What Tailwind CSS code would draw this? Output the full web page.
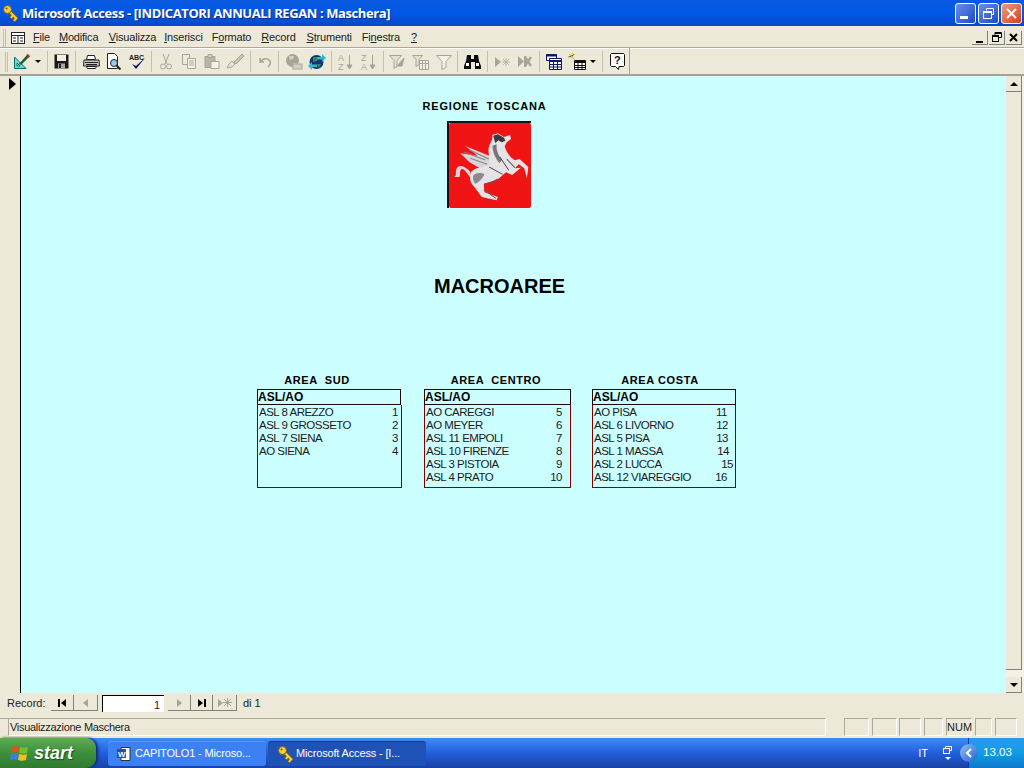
<!DOCTYPE html>
<html lang="en">
<head>
    <meta charset="UTF-8">
    <title>Microsoft Access</title>
    <script src="https://cdn.jsdelivr.net/npm/@tailwindcss/browser@4"></script>
</head>
<body class="bg-[#ece9d8] font-['Liberation_Sans',sans-serif] text-black overflow-hidden">
<div class="w-[1024px] h-[768px] flex flex-col overflow-hidden">

    <!-- title bar -->
    <div class="h-[26px] shrink-0 flex items-center pl-[2px] pr-[2px] bg-gradient-to-b from-[#0a5ae0] via-[#0058e6] to-[#0348c8]">
        <svg class="w-[18px] h-[18px]" viewBox="0 0 18 18"><path d="M6 6l9 9M11 11l-2 3M14 14l-2 3" stroke="#7a5a10" stroke-width="4"/><path d="M6 6l9 9M11 11l-2 3M14 14l-2 3" stroke="#f0d040" stroke-width="2"/><circle cx="5.500" cy="5.500" r="4" fill="#f0d040" stroke="#7a5a10"/><circle cx="4.500" cy="4.500" r="1" fill="#7a5a10"/></svg>
        <span class="ml-[2px] mt-[1px] text-white font-bold text-[13px] tracking-[-0.4px] font-['Open_Sans',sans-serif] [text-shadow:1px_1px_0_#0a2a80]">Microsoft Access - [INDICATORI ANNUALI REGAN : Maschera]</span>
        <div class="ml-auto flex gap-[2px]">
            <div class="w-[21px] h-[21px] rounded-[3px] border border-white bg-gradient-to-br from-[#6d8ee8] to-[#1c47c8] flex items-end pl-[4px] pb-[4px]"><div class="w-[8px] h-[3px] bg-white"></div></div>
            <div class="w-[21px] h-[21px] rounded-[3px] border border-white bg-gradient-to-br from-[#6d8ee8] to-[#1c47c8] flex items-center justify-center">
                <svg class="w-[13px] h-[13px]" viewBox="0 0 13 13" fill="none" stroke="#fff"><path d="M4.500 3.500V1.500h7v6h-2"/><rect x="1.500" y="4.500" width="8" height="7"/><path d="M1.500 5.500h8" /></svg>
            </div>
            <div class="w-[21px] h-[21px] rounded-[3px] border border-white bg-gradient-to-br from-[#ee9a78] to-[#d43d12] flex items-center justify-center">
                <svg class="w-[13px] h-[13px]" viewBox="0 0 13 13" stroke="#fff" stroke-width="2"><path d="M2 2l9 9M11 2l-9 9"/></svg>
            </div>
        </div>
    </div>

    <!-- menu bar -->
    <div class="h-[22px] shrink-0 flex items-center pt-[2px] pl-[3px] pr-[2px] text-[11px] tracking-[-0.2px] text-[#222] border-b border-[#aca899]">
        <div class="w-[3px] h-[18px] border-x border-[#c4c0b0] mr-[4px]"></div>
        <svg class="w-[16px] h-[14px] mr-[5px]" viewBox="0 0 16 14"><rect x="1.500" y="1.500" width="13" height="11" fill="#fff" stroke="#222"/><path d="M1.500 4.500h13M8 4.500v8M3 7h3M3 10h3M10 7h3M10 10h3" stroke="#222"/></svg>
        <span class="ml-[2px]"><u>F</u>ile</span>
        <span class="ml-[9px]"><u>M</u>odifica</span>
        <span class="ml-[10.500px]"><u>V</u>isualizza</span>
        <span class="ml-[8px]"><u>I</u>nserisci</span>
        <span class="ml-[9px]">F<u>o</u>rmato</span>
        <span class="ml-[10px]"><u>R</u>ecord</span>
        <span class="ml-[11px]"><u>S</u>trumenti</span>
        <span class="ml-[10px]">Fi<u>n</u>estra</span>
        <span class="ml-[11px]"><u>?</u></span>
        <div class="ml-auto flex gap-[1px]">
            <div class="w-[16px] h-[14px] bg-[#ece9d8] border-r border-b border-[#808080] flex items-end justify-center pb-[1px]"><div class="w-[7px] h-[2px] bg-black"></div></div>
            <div class="w-[16px] h-[14px] bg-[#ece9d8] border-r border-b border-[#808080] flex items-center justify-center"><svg class="w-[10px] h-[10px]" viewBox="0 0 10 10" fill="none" stroke="#000"><path d="M3 3V.5h6.500v5H7"/><path d="M3 1.500h6" /><rect x=".5" y="3.500" width="6" height="6"/><path d="M.5 4.500h6"/></svg></div>
            <div class="w-[16px] h-[14px] bg-[#ece9d8] border-r border-b border-[#808080] flex items-center justify-center"><svg class="w-[9px] h-[9px]" viewBox="0 0 9 9" stroke="#000" stroke-width="2"><path d="M1 1l7 7M8 1l-7 7"/></svg></div>
        </div>
    </div>

    <!-- toolbar -->
    <div class="h-[28px] shrink-0 flex items-center border-t border-white border-b-[2px] border-b-[#a5a296]">
        <div class="w-[12px] flex justify-center"><div class="w-[3px] h-[20px] border-x border-[#c4c0b0]"></div></div>
        <div class="w-[19px] flex justify-center">
            <svg class="w-[18px] h-[18px]" viewBox="0 0 18 18"><path d="M1.500 15.500V4l11.500 11.500z" fill="#7fd0d0" stroke="#007070"/><path d="M4 13V10l3 3z" fill="#ece9d8" stroke="#007070"/><path d="M6 11l8-9 2 2-8 8z" fill="#106030"/><path d="M14 1.500l2.500 2.500" stroke="#d02020" stroke-width="2"/></svg>
        </div>
        <div class="w-[13px] flex justify-center"><div class="w-0 h-0 border-x-[3px] border-x-transparent border-t-[3px] border-t-black"></div></div>
        <div class="w-px h-[21px] bg-[#c4c0b0] ml-[3px] mr-[2px]"></div>
        <div class="w-[23px] flex justify-center">
            <svg class="w-[15px] h-[15px]" viewBox="0 0 15 15"><path d="M.5.5h14v14H.5z" fill="#1a1a1a"/><path d="M3 1h9v6H3z" fill="#f0f0e8"/><path d="M4 9.500h7v5H4z" fill="#a8a8a0"/><path d="M5 10h2v4H5z" fill="#222"/></svg>
        </div>
        <div class="w-px h-[21px] bg-[#c4c0b0] ml-[2px] mr-[4px]"></div>
        <div class="w-[22px] flex justify-center">
            <svg class="w-[17px] h-[16px]" viewBox="0 0 17 16"><path d="M4.500 1.500h7l1 4h-9z" fill="#fff" stroke="#222"/><path d="M1 6h15l.5 6H.5z" fill="#c8c8c0" stroke="#222"/><path d="M2 8.500h13M3 10.500h11" stroke="#222"/><path d="M3.500 12.500h10l-1 2H4.500z" fill="#fff" stroke="#222"/></svg>
        </div>
        <div class="w-[23px] flex justify-center">
            <svg class="w-[17px] h-[17px]" viewBox="0 0 17 17"><path d="M2.500.5h7l3 3v12h-10z" fill="#fff" stroke="#222"/><circle cx="9" cy="10" r="3.500" fill="#8fd0e8" stroke="#222"/><path d="M11.500 12.500l4 4" stroke="#222" stroke-width="2"/></svg>
        </div>
        <div class="w-[24px] flex justify-center">
            <svg class="w-[17px] h-[17px]" viewBox="0 0 17 17"><text x="0" y="7" font-size="7" font-weight="700" font-family="Liberation Sans" fill="#222">ABC</text><path d="M3 11l4 5 9-11-9 8z" fill="#101060"/></svg>
        </div>
        <div class="w-px h-[21px] bg-[#c4c0b0] ml-[2px] mr-[2px]"></div>
        <div class="w-[23px] flex justify-center">
            <svg class="w-[14px] h-[17px]" viewBox="0 0 14 17" fill="none" stroke="#a8a598"><path d="M4 1l4 10M10 1L6 11"/><circle cx="4" cy="13.500" r="2.500"/><circle cx="10" cy="13.500" r="2.500"/></svg>
        </div>
        <div class="w-[23px] flex justify-center">
            <svg class="w-[16px] h-[15px]" viewBox="0 0 16 15" fill="#ece9d8" stroke="#a8a598"><path d="M1.500.5h7v10h-7z"/><path d="M6.500 4.500h8v10h-8z" fill="#f4f2e8"/><path d="M8 7h5M8 9h5M8 11h5"/></svg>
        </div>
        <div class="w-[23px] flex justify-center">
            <svg class="w-[16px] h-[15px]" viewBox="0 0 16 15" fill="#b8b5a8" stroke="#a8a598"><path d="M1 2.500h10v11H1z"/><path d="M4 .5h4v3H4z" fill="#d8d5c8"/><path d="M7 7.500h8v7H7z" fill="#f4f2e8"/></svg>
        </div>
        <div class="w-[24px] flex justify-center">
            <svg class="w-[19px] h-[17px]" viewBox="0 0 19 17" fill="none" stroke="#a8a598"><path d="M1 15l5-1 3-3-3-3-3 3z" fill="#e4e1d4"/><path d="M8 9l8-8 2 2-8 8z" fill="#c8c5b8"/></svg>
        </div>
        <div class="w-px h-[21px] bg-[#c4c0b0] ml-[3px] mr-[2px]"></div>
        <div class="w-[23px] flex justify-center">
            <svg class="w-[16px] h-[12px]" viewBox="0 0 16 12" fill="none" stroke="#a8a598" stroke-width="1.500"><path d="M3 2v4h4M3.500 5.500C6 2 11 2 13 5c1 2 0 4-2 6"/></svg>
        </div>
        <div class="w-px h-[21px] bg-[#c4c0b0] ml-[2px] mr-[3px]"></div>
        <div class="w-[23px] flex justify-center">
            <svg class="w-[18px] h-[18px]" viewBox="0 0 18 18"><circle cx="7.500" cy="7.500" r="6.500" fill="#a8a598"/><path d="M4 3h5l-1 3-3 1zM8 10h4v3H8z" fill="#d4d1c4"/><rect x="8" y="11" width="9" height="5" fill="#d4d1c4" stroke="#a8a598"/></svg>
        </div>
        <div class="w-[23px] flex justify-center">
            <svg class="w-[18px] h-[18px]" viewBox="0 0 18 18"><circle cx="8.500" cy="9" r="7" fill="#183078"/><path d="M5 4h5l-1 4-4 1zM9 11h4l-2 4z" fill="#289048"/><path d="M9 4h5V1l4 4-4 4V6.500H9z" fill="#30b8c8"/><path d="M9 14H4v3L0 13l4-4v2.500h5z" fill="#30b8c8"/></svg>
        </div>
        <div class="w-px h-[21px] bg-[#c4c0b0] ml-[3px] mr-[2px]"></div>
        <div class="w-[23px] flex justify-center">
            <svg class="w-[17px] h-[18px]" viewBox="0 0 17 18" fill="none" stroke="#a8a598"><text x="1" y="8" font-size="9" font-family="Liberation Sans" fill="#a8a598" stroke="none">A</text><text x="1" y="17" font-size="9" font-family="Liberation Sans" fill="#a8a598" stroke="none">Z</text><path d="M12.500 2v12" /><path d="M10 12h5l-2.500 4z" fill="#a8a598"/></svg>
        </div>
        <div class="w-[23px] flex justify-center">
            <svg class="w-[17px] h-[18px]" viewBox="0 0 17 18" fill="none" stroke="#a8a598"><text x="1" y="8" font-size="9" font-family="Liberation Sans" fill="#a8a598" stroke="none">Z</text><text x="1" y="17" font-size="9" font-family="Liberation Sans" fill="#a8a598" stroke="none">A</text><path d="M12.500 2v12" /><path d="M10 12h5l-2.500 4z" fill="#a8a598"/></svg>
        </div>
        <div class="w-px h-[21px] bg-[#c4c0b0] ml-[3px] mr-[2px]"></div>
        <div class="w-[23px] flex justify-center">
            <svg class="w-[17px] h-[16px]" viewBox="0 0 17 16" fill="none" stroke="#a8a598"><path d="M.5 1.500h12l-4.500 5v6l-3 2v-8z" fill="#e4e1d4"/><path d="M8 12l7-8-2 8z" fill="#a8a598"/></svg>
        </div>
        <div class="w-[23px] flex justify-center">
            <svg class="w-[17px] h-[16px]" viewBox="0 0 17 16" fill="none" stroke="#a8a598"><path d="M.5 1.500h10l-3.500 4v5l-3 2v-7z" fill="#e4e1d4"/><path d="M7.500 6.500h9v9h-9zM7.500 9.500h9M10.500 6.500v9M13.500 6.500v9" fill="#f4f2e8"/></svg>
        </div>
        <div class="w-[23px] flex justify-center">
            <svg class="w-[16px] h-[16px]" viewBox="0 0 16 16" fill="none" stroke="#a8a598"><path d="M.5 1.500h15l-5.500 6v6l-4 2v-8z" fill="#f4f2e8"/></svg>
        </div>
        <div class="w-px h-[21px] bg-[#c4c0b0] ml-[2px] mr-[3px]"></div>
        <div class="w-[23px] flex justify-center">
            <svg class="w-[17px] h-[15px]" viewBox="0 0 17 15" fill="#0c0c0c"><path d="M3 1h4v4h3V1h4l1 6 2 5v3h-6V8H7v7H0v-3l2-5z"/><path d="M2 9h3v3H2zM12 9h3v3h-3z" fill="#fff"/></svg>
        </div>
        <div class="w-px h-[21px] bg-[#c4c0b0] ml-[3px] mr-[2px]"></div>
        <div class="w-[23px] flex justify-center">
            <svg class="w-[16px] h-[12px]" viewBox="0 0 16 12" fill="#a8a598"><path d="M1 1l6 5-6 5z"/><path d="M12 2v8M8 6h8M9 3l6 6M15 3l-6 6" stroke="#b8b5a8"/></svg>
        </div>
        <div class="w-[23px] flex justify-center">
            <svg class="w-[15px] h-[13px]" viewBox="0 0 15 13" fill="#a8a598"><path d="M1 1l6 5.500-6 5.500z"/><path d="M7 1h2v11H7z"/><path d="M8 11l6-9" stroke="#a8a598" stroke-width="2.500"/><path d="M8 2l6 9" stroke="#a8a598" stroke-width="2.500"/></svg>
        </div>
        <div class="w-px h-[21px] bg-[#c4c0b0] ml-[3px] mr-[2px]"></div>
        <div class="w-[23px] flex justify-center">
            <svg class="w-[17px] h-[16px]" viewBox="0 0 17 16"><path d="M1.500.5h10v6h-10z" fill="#fff" stroke="#101868"/><path d="M1.500.5h10v2h-10z" fill="#101868"/><path d="M4.500 4.500h12v11h-12z" fill="#fff" stroke="#101868"/><path d="M4.500 7h12" stroke="#101868" stroke-width="2"/><path d="M4.500 10.500h12M4.500 13h12M8.500 7v8M12.500 7v8" stroke="#101868"/></svg>
        </div>
        <div class="w-[23px] flex justify-center">
            <svg class="w-[18px] h-[17px]" viewBox="0 0 18 17"><path d="M4 0v4M0 4h4l3-3M4 4l3 3M1 1l3 3" stroke="#c8c030"/><path d="M6.500 7.500h11v9h-11z" fill="#fff" stroke="#111"/><path d="M6.500 9h11" stroke="#111" stroke-width="2"/><path d="M6.500 12.500h11M6.500 14.500h11M10 9v7M14 9v7" stroke="#111"/></svg>
        </div>
        <div class="w-[10px] flex justify-center"><div class="w-0 h-0 border-x-[3px] border-x-transparent border-t-[3px] border-t-black"></div></div>
        <div class="w-px h-[21px] bg-[#c4c0b0] ml-[4px] mr-[3px]"></div>
        <div class="w-[23px] flex justify-center">
            <svg class="w-[15px] h-[17px]" viewBox="0 0 15 17"><path d="M1.500.5h12l1 1v11l-1 1H9l-.5 3-3-3h-4l-1-1v-11z" fill="#fff" stroke="#111"/><text x="4" y="10.500" font-size="11" font-weight="700" font-family="Liberation Sans" fill="#111">?</text></svg>
        </div>
        <div class="w-px h-[27px] bg-[#a5a296]"></div>
    </div>

    <!-- form area -->
    <div class="flex-1 min-h-0 flex">
        <div class="w-[21px] shrink-0 border-r border-black pt-[2px] pl-[9px]">
            <div class="w-0 h-0 border-y-[6px] border-y-transparent border-l-[7px] border-l-black"></div>
        </div>
        <div class="flex-1 min-w-0 bg-[#ccffff] flex flex-col">
            <div class="ml-[400px] w-[127px] mt-[24px] text-center text-[11px] leading-[13px] font-bold tracking-[0.8px] whitespace-pre">REGIONE  TOSCANA</div>
            <div class="ml-[426px] mt-[8px] w-[84px] h-[87px] border-l-2 border-t-2 border-[#111]">
                <div class="w-full h-full bg-[#f01414] rounded-[2px]">
                    <svg class="w-full h-full" viewBox="27 24 243 255" preserveAspectRatio="none">
                        <path d="M60 115L112 122L75 93L150 124L152 152L122 162L88 142Z" fill="#d8d4d8"/>
                        <path d="M72 112L135 135M88 105L145 132M90 130L140 148" stroke="#8a8488" stroke-width="3" fill="none"/>
                        <path d="M90 170C70 148 52 148 48 165C46 175 50 183 42 186L58 186C62 178 56 164 66 162C74 163 80 176 90 186Z" fill="#d8d4d8"/>
                        <path d="M155 60L172 55L190 66L208 60L211 72L198 82L192 94C196 108 205 125 222 136L236 132L262 156L258 190L250 160L234 148L222 160L240 158L214 180L196 172L170 194L130 206L132 232L172 246L168 256L124 246L104 218C92 208 84 190 92 172C104 156 128 158 146 150C150 130 140 110 146 92C150 82 158 74 155 60Z" fill="#e6e3e6"/>
                        <path d="M158 62L172 58L190 68L194 78L182 82L174 76L164 84Z" fill="#3a3a3e"/>
                        <path d="M156 92L168 88C166 104 172 120 184 136L176 144C164 128 156 110 156 92Z" fill="#77747a"/>
                        <path d="M100 180C108 172 124 172 132 178C126 192 114 204 104 206C98 198 96 188 100 180Z" fill="#8c888c"/>
                        <path d="M132 208C142 206 160 200 172 192M198 132L222 158M178 126L204 166M130 224L166 250M146 156L186 178" stroke="#5a5a5e" stroke-width="3" fill="none"/>
                    </svg>
                </div>
            </div>
            <div class="ml-[413px] mt-[66px] w-[130px] text-center text-[20px] leading-[24px] font-bold">MACROAREE</div>

            <div class="ml-[236px] mt-[76px] flex items-start">
                <div class="w-[145px]">
                    <div class="h-[13px] text-center text-[11px] leading-[13px] font-bold tracking-[0.6px] whitespace-pre pr-[25px]">AREA  SUD</div>
                    <div class="w-[144px] h-[16px] mt-[2px] border border-[#200808] text-[12px] leading-[14px] font-bold">ASL/AO</div>
                    <div class="h-[83px] border border-t-0 border-[#800000] pl-[1px] pr-[3px] pt-[1px] text-[11.5px] leading-[13px] tracking-[-0.5px] text-[#1a1a1a]">
                        <div class="flex justify-between"><span>ASL 8 AREZZO</span><span>1</span></div>
                        <div class="flex justify-between"><span>ASL 9 GROSSETO</span><span>2</span></div>
                        <div class="flex justify-between"><span>ASL 7 SIENA</span><span>3</span></div>
                        <div class="flex justify-between"><span>AO SIENA</span><span>4</span></div>
                    </div>
                </div>
                <div class="w-[147px] ml-[22px]">
                    <div class="h-[13px] text-center text-[11px] leading-[13px] font-bold tracking-[0.6px] whitespace-pre pr-[3px]">AREA  CENTRO</div>
                    <div class="h-[16px] mt-[2px] border border-[#200808] text-[12px] leading-[14px] font-bold">ASL/AO</div>
                    <div class="h-[83px] border border-t-0 border-[#800000] pl-[1px] pr-[8px] pt-[1px] text-[11.5px] leading-[13px] tracking-[-0.5px] text-[#1a1a1a]">
                        <div class="flex justify-between"><span>AO CAREGGI</span><span>5</span></div>
                        <div class="flex justify-between"><span>AO MEYER</span><span>6</span></div>
                        <div class="flex justify-between"><span>ASL 11 EMPOLI</span><span>7</span></div>
                        <div class="flex justify-between"><span>ASL 10 FIRENZE</span><span>8</span></div>
                        <div class="flex justify-between"><span>ASL 3 PISTOIA</span><span>9</span></div>
                        <div class="flex justify-between"><span>ASL 4 PRATO</span><span>10</span></div>
                    </div>
                </div>
                <div class="w-[144px] ml-[21px]">
                    <div class="h-[13px] text-center text-[11px] leading-[13px] font-bold tracking-[0.6px] pr-[8px]">AREA COSTA</div>
                    <div class="h-[16px] mt-[2px] border border-[#200808] text-[12px] leading-[14px] font-bold">ASL/AO</div>
                    <div class="h-[83px] border border-t-0 border-[#800000] pl-[1px] pt-[1px] text-[11.5px] leading-[13px] tracking-[-0.5px] text-[#1a1a1a]">
                        <div class="flex justify-between pr-[8px]"><span>AO PISA</span><span>11</span></div>
                        <div class="flex justify-between pr-[7px]"><span>ASL 6 LIVORNO</span><span>12</span></div>
                        <div class="flex justify-between pr-[7px]"><span>ASL 5 PISA</span><span>13</span></div>
                        <div class="flex justify-between pr-[6px]"><span>ASL 1 MASSA</span><span>14</span></div>
                        <div class="flex justify-between pr-[2px]"><span>ASL 2 LUCCA</span><span>15</span></div>
                        <div class="flex justify-between pr-[8px]"><span>ASL 12 VIAREGGIO</span><span>16</span></div>
                    </div>
                </div>
            </div>
        </div>
        <!-- scrollbar -->
        <div class="w-[18px] shrink-0 flex flex-col pr-[2px] bg-[#f4f2e8]">
            <div class="h-[16px] bg-[#ece9d8] border-r border-b border-[#808080] flex items-center justify-center"><div class="w-0 h-0 border-x-[4px] border-x-transparent border-b-[4px] border-b-black"></div></div>
            <div class="h-[578px] bg-[#ece9d8] border-r border-b border-[#808080]"></div>
            <div class="flex-1"></div>
            <div class="h-[16px] bg-[#ece9d8] border-r border-b border-[#808080] flex items-center justify-center"><div class="w-0 h-0 border-x-[4px] border-x-transparent border-t-[4px] border-t-black"></div></div>
        </div>
    </div>

    <!-- record navigation -->
    <div class="h-[20px] shrink-0 flex items-center pl-[7px] text-[11px] text-[#222]">
        <span class="w-[44px]">Record:</span>
        <div class="w-[23px] h-[16px] border-r border-b border-[#808080] flex items-center justify-center gap-px"><div class="w-[2px] h-[8px] bg-black"></div><div class="w-0 h-0 border-y-[4px] border-y-transparent border-r-[5px] border-r-black"></div></div>
        <div class="w-[24px] h-[16px] border-r border-b border-[#808080] flex items-center justify-center"><div class="w-0 h-0 border-y-[4px] border-y-transparent border-r-[5px] border-r-[#a8a598]"></div></div>
        <div class="w-[62px] h-[17px] ml-[4px] bg-white border-l border-t border-black text-right pr-[4px] leading-[18px]">1</div>
        <div class="w-[23px] h-[16px] ml-[4px] border-r border-b border-[#808080] flex items-center justify-center"><div class="w-0 h-0 border-y-[4px] border-y-transparent border-l-[5px] border-l-[#a8a598]"></div></div>
        <div class="w-[22px] h-[16px] border-r border-b border-[#808080] flex items-center justify-center gap-px"><div class="w-0 h-0 border-y-[4px] border-y-transparent border-l-[5px] border-l-black"></div><div class="w-[2px] h-[8px] bg-black"></div></div>
        <div class="w-[24px] h-[16px] border-r border-b border-[#808080] flex items-center justify-center"><div class="w-0 h-0 border-y-[4px] border-y-transparent border-l-[5px] border-l-[#a8a598]"></div><svg class="w-[9px] h-[9px]" viewBox="0 0 9 9" stroke="#a8a598"><path d="M4.500 0v9M0 4.500h9M1 1l7 7M8 1l-7 7"/></svg></div>
        <span class="ml-[6px]">di 1</span>
    </div>

    <!-- status bar -->
    <div class="h-[25px] shrink-0 pt-[5px] flex text-[11px] text-[#222]">
        <div class="w-[8px] h-px bg-[#aca899]"></div>
        <div class="w-[818px] h-[18px] border-l border-t border-[#aca899] border-r border-r-white border-b border-b-white pl-[1px] leading-[17px] tracking-[-0.3px]">Visualizzazione Maschera</div>
        <div class="w-[25px] h-[18px] ml-[18px] border-l border-t border-[#aca899] border-r border-r-white border-b border-b-white"></div>
        <div class="w-[25px] h-[18px] ml-[3px] border-l border-t border-[#aca899] border-r border-r-white border-b border-b-white"></div>
        <div class="w-[22px] h-[18px] ml-[2px] border-l border-t border-[#aca899] border-r border-r-white border-b border-b-white"></div>
        <div class="w-[19px] h-[18px] ml-[3px] border-l border-t border-[#aca899] border-r border-r-white border-b border-b-white"></div>
        <div class="w-[26px] h-[18px] ml-[3px] border-l border-t border-[#aca899] border-r border-r-white border-b border-b-white text-center leading-[17px]">NUM</div>
        <div class="w-[17px] h-[18px] ml-[3px] border-l border-t border-[#aca899] border-r border-r-white border-b border-b-white"></div>
        <div class="w-[22px] h-[18px] ml-[3px] border-l border-t border-[#aca899] border-r border-r-white border-b border-b-white"></div>
    </div>

    <!-- taskbar -->
    <div class="h-[30px] shrink-0 flex items-center bg-gradient-to-b from-[#3f8cf3] via-[#245edb] to-[#1941a5] text-white">
        <div class="w-[96px] h-full rounded-r-[10px] bg-gradient-to-b from-[#5eac56] via-[#3c8f3c] to-[#2f7a2f] flex items-center pl-[10px] shadow-[2px_0_3px_#0c2a70]">
            <svg class="w-[20px] h-[19px]" viewBox="0 0 20 19"><path d="M2 3c3-1 5-1 7 0l-1 6c-2-1-4-1-7 0z" fill="#e05020"/><path d="M10 3c3 1 5 1 8 0l-1 6c-3 1-5 1-8 0z" fill="#70c030"/><path d="M1 10c3-1 5-1 7 0l-1 6c-2-1-4-1-7 0z" fill="#3880e8"/><path d="M9 10c3 1 5 1 8 0l-1 6c-3 1-5 1-8 0z" fill="#f0c020"/></svg>
            <span class="ml-[4px] text-[18px] font-bold italic leading-none [text-shadow:1px_1px_1px_#1a4a1a]">start</span>
        </div>
        <div class="ml-[12px] w-[158px] h-[25px] rounded-[3px] bg-[#3c81f3] flex items-center pl-[8px] text-[11px] tracking-[-0.15px] border-t border-[#5a98f5]">
            <svg class="w-[16px] h-[16px] shrink-0" viewBox="0 0 16 16"><path d="M5 1.500h9v13H5z" fill="#fff" stroke="#333"/><path d="M1 3h9v9H1z" fill="#2a4ab0"/><text x="2" y="10.500" font-size="8" font-weight="700" font-family="Liberation Sans" fill="#fff">W</text></svg>
            <span class="ml-[3px] whitespace-nowrap">CAPITOLO1 - Microso...</span>
        </div>
        <div class="ml-[2px] w-[158px] h-[25px] rounded-[3px] bg-[#1e52b7] flex items-center pl-[9px] text-[11px] tracking-[-0.15px] border-t border-[#173f90]">
            <svg class="w-[18px] h-[18px] shrink-0" viewBox="0 0 18 18"><path d="M6 6l9 9M11 11l-2 3M14 14l-2 3" stroke="#7a5a10" stroke-width="4"/><path d="M6 6l9 9M11 11l-2 3M14 14l-2 3" stroke="#f0d040" stroke-width="2"/><circle cx="5.500" cy="5.500" r="4" fill="#f0d040" stroke="#7a5a10"/><circle cx="4.500" cy="4.500" r="1" fill="#7a5a10"/></svg>
            <span class="ml-[1px] whitespace-nowrap">Microsoft Access - [I...</span>
        </div>
        <div class="ml-auto flex items-center h-full">
            <span class="text-[11px] mr-[15px]">IT</span>
            <div class="mr-[16px] flex flex-col items-center gap-[3px]">
                <svg class="w-[9px] h-[8px]" viewBox="0 0 9 8" fill="none" stroke="#fff"><path d="M2.500 2.500V.5h6v4H6.500"/><rect x=".5" y="2.500" width="6" height="5"/></svg>
                <div class="w-0 h-0 border-x-[3px] border-x-transparent border-t-[3px] border-t-white"></div>
            </div>
            <div class="w-[56px] h-full bg-gradient-to-b from-[#2a98ee] via-[#109ce4] to-[#0e78cc] border-l border-[#0a3aa0] flex items-center">
                <div class="w-[18px] h-[18px] -ml-[9px] rounded-full bg-gradient-to-br from-[#90c0f8] to-[#2060d0] flex items-center justify-center">
                    <svg class="w-[8px] h-[10px]" viewBox="0 0 8 10" fill="none" stroke="#fff" stroke-width="2"><path d="M6 1L2 5l4 4"/></svg>
                </div>
                <span class="ml-[5px] text-[11.5px]">13.03</span>
            </div>
        </div>
    </div>
</div>
</body>
</html>
